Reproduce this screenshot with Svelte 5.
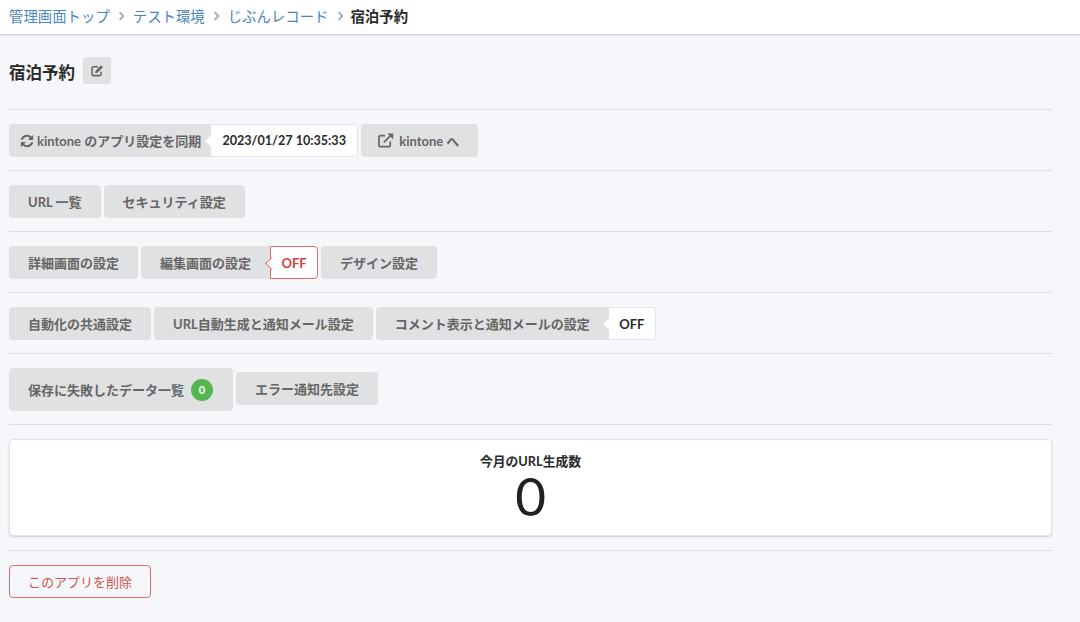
<script>
  const crumbs = ["管理画面トップ", "テスト環境", "じぶんレコード"];
</script>

<header class="topbar">
  {#each crumbs as crumb}
    <a href="#top" class="crumb">{crumb}</a>
    <svg class="sep" width="7" height="10" viewBox="0 0 7 10"><path d="M1.6 1.2 5.2 5 1.6 8.8" fill="none" stroke="#a9abae" stroke-width="1.9"/></svg>
  {/each}
  <span class="crumb-active">宿泊予約</span>
</header>

<main class="page">
  <div class="title-row">
    <h1>宿泊予約</h1>
    <button class="edit-btn" aria-label="編集">
      <svg width="13" height="13" viewBox="0 0 16 16"><path d="M12.4 9.4v3.2a1.7 1.7 0 0 1-1.7 1.7H3a1.7 1.7 0 0 1-1.7-1.7V5A1.7 1.7 0 0 1 3 3.3h5.6" fill="none" stroke="#666" stroke-width="1.9"/><path d="M5.6 8.4 12.4 1.6l2.4 2.4L8 10.8l-3 .6z" fill="#666"/></svg>
    </button>
  </div>

  <section class="row">
    <div class="labeled">
      <button class="btn sync">
        <svg width="14" height="14" viewBox="0 0 16 16"><path d="M15 1v5.8H9.2l2.1-2.1A4.9 4.9 0 0 0 3.2 6.6H.9a7.2 7.2 0 0 1 12-3.7z" fill="#666"/><path d="M1 15V9.2h5.8l-2.1 2.1a4.9 4.9 0 0 0 8.1-1.9h2.3a7.2 7.2 0 0 1-12 3.7z" fill="#666"/></svg>
        kintone のアプリ設定を同期
      </button>
      <span class="tag date">2023/01/27 10:35:33</span>
    </div>
    <button class="btn kintone">
      <svg width="16" height="15" viewBox="0 0 16 15"><path d="M12.2 8.6v3.4a1.7 1.7 0 0 1-1.7 1.7H2.7A1.7 1.7 0 0 1 1 12V4.4a1.7 1.7 0 0 1 1.7-1.7H7" fill="none" stroke="#666" stroke-width="1.7"/><path d="M5.8 9.4 13 2.2" fill="none" stroke="#666" stroke-width="1.8"/><path d="M9.4.6h5.8v5.8z" fill="#666"/></svg>
      kintone へ
    </button>
  </section>

  <section class="row">
    <button class="btn">URL 一覧</button>
    <button class="btn">セキュリティ設定</button>
  </section>

  <section class="row">
    <button class="btn">詳細画面の設定</button>
    <div class="labeled">
      <button class="btn">編集画面の設定</button>
      <span class="tag off-red">OFF</span>
    </div>
    <button class="btn">デザイン設定</button>
  </section>

  <section class="row">
    <button class="btn">自動化の共通設定</button>
    <button class="btn">URL自動生成と通知メール設定</button>
    <div class="labeled">
      <button class="btn">コメント表示と通知メールの設定</button>
      <span class="tag off">OFF</span>
    </div>
  </section>

  <section class="row center">
    <button class="btn big">保存に失敗したデータ一覧 <span class="badge">0</span></button>
    <button class="btn">エラー通知先設定</button>
  </section>

  <section class="row card-row">
    <div class="card">
      <div class="stat-label">今月のURL生成数</div>
      <div class="stat-value">0</div>
    </div>
  </section>

  <section class="row last">
    <button class="btn danger">このアプリを削除</button>
  </section>
</main>

<style>
  :global(body) {
    margin: 0;
    background: #f6f7fb;
    font-family: Lato, "Noto Sans CJK JP", sans-serif;
    color: #212121;
  }
  .topbar {
    height: 34px;
    box-sizing: border-box;
    background: #fff;
    box-shadow: 0 1px 2px rgba(0, 0, 0, 0.22);
    display: flex;
    align-items: center;
    padding: 0 9px 3px;
    font-size: 14.4px;
    position: relative;
  }
  .crumb {
    color: #4a84c4;
    text-decoration: none;
  }
  .sep {
    margin: 1px 7.5px 0 8.5px;
  }
  .crumb-active {
    font-weight: 700;
    color: #2a2a2a;
    margin-left: -1px;
  }
  .page {
    padding: 0 28px 0 9px;
  }
  .title-row {
    display: flex;
    align-items: center;
    gap: 8px;
    height: 75px;
    border-bottom: 1px solid #dcdde0;
  }
  h1 {
    margin: 1px 0 0;
    font-size: 16.5px;
    font-weight: 700;
    color: #2a2a2a;
  }
  .edit-btn {
    width: 28px;
    height: 27px;
    padding: 0;
    border: 0;
    border-radius: 3px;
    background: #e0e1e2;
    display: flex;
    align-items: center;
    justify-content: center;
    margin-bottom: 2px;
  }
  .row {
    display: flex;
    gap: 3px;
    padding: 14px 0 13px;
    border-bottom: 1px solid #dcdde0;
  }
  .row.center {
    align-items: center;
  }
  .row.center .btn:not(.big) {
    margin-bottom: 2px;
  }
  .row.card-row {
    padding-bottom: 14px;
  }
  .row.last {
    border-bottom: 0;
  }
  .btn {
    height: 33px;
    padding: 0 19px;
    border: 0;
    border-radius: 4px;
    background: #e0e1e2;
    color: #666;
    font: 700 13px Lato, "Noto Sans CJK JP", sans-serif;
    white-space: nowrap;
    display: flex;
    align-items: center;
  }
  .btn.big {
    height: 43px;
    padding-right: 20px;
  }
  .btn.sync {
    padding: 0 10px 0 11px;
    gap: 3px;
  }
  .btn.kintone {
    padding: 0 19px 0 17px;
    gap: 5px;
  }
  .labeled {
    display: flex;
  }
  .labeled .btn {
    border-radius: 4px 0 0 4px;
  }
  .tag {
    position: relative;
    display: flex;
    align-items: center;
    background: #fff;
    border: 1px solid #e4e5e8;
    border-left: 0;
    border-radius: 0 4px 4px 0;
    font-size: 13px;
    font-weight: 700;
    color: #2a2a2a;
    box-sizing: border-box;
  }
  .tag::before {
    content: "";
    position: absolute;
    left: -4px;
    top: 50%;
    width: 8px;
    height: 8px;
    margin-top: -4px;
    background: #fff;
    transform: rotate(45deg);
  }
  .date {
    width: 147px;
    justify-content: center;
    font-size: 12.6px;
  }
  .off {
    width: 47px;
    justify-content: center;
  }
  .off-red {
    width: 48px;
    justify-content: center;
    color: #d0413c;
    border: 1px solid #dc6f6b;
  }
  .off-red::before {
    border-left: 1px solid #dc6f6b;
    border-bottom: 1px solid #dc6f6b;
  }
  .badge {
    display: inline-flex;
    align-items: center;
    justify-content: center;
    width: 22px;
    height: 22px;
    margin-left: 7px;
    border-radius: 50%;
    background: #55b651;
    color: #fff;
    font-size: 11px;
  }
  .card {
    flex: 1;
    height: 97px;
    background: #fff;
    border-radius: 4px;
    border: 1px solid #e2e3e6;
    box-sizing: border-box;
    box-shadow: 0 1px 2px rgba(0, 0, 0, 0.15);
    text-align: center;
    padding-top: 14px;
  }
  .stat-label {
    font-size: 12.8px;
    font-weight: 700;
    line-height: 15px;
    color: #2a2a2a;
  }
  .stat-value {
    font-size: 53px;
    line-height: 53px;
    color: #212121;
  }
  .btn.danger {
    width: 142px;
    justify-content: center;
    padding: 0;
    background: transparent;
    border: 1px solid #dc6f6b;
    color: #d0514c;
    font-weight: 400;
    box-sizing: border-box;
  }
</style>
